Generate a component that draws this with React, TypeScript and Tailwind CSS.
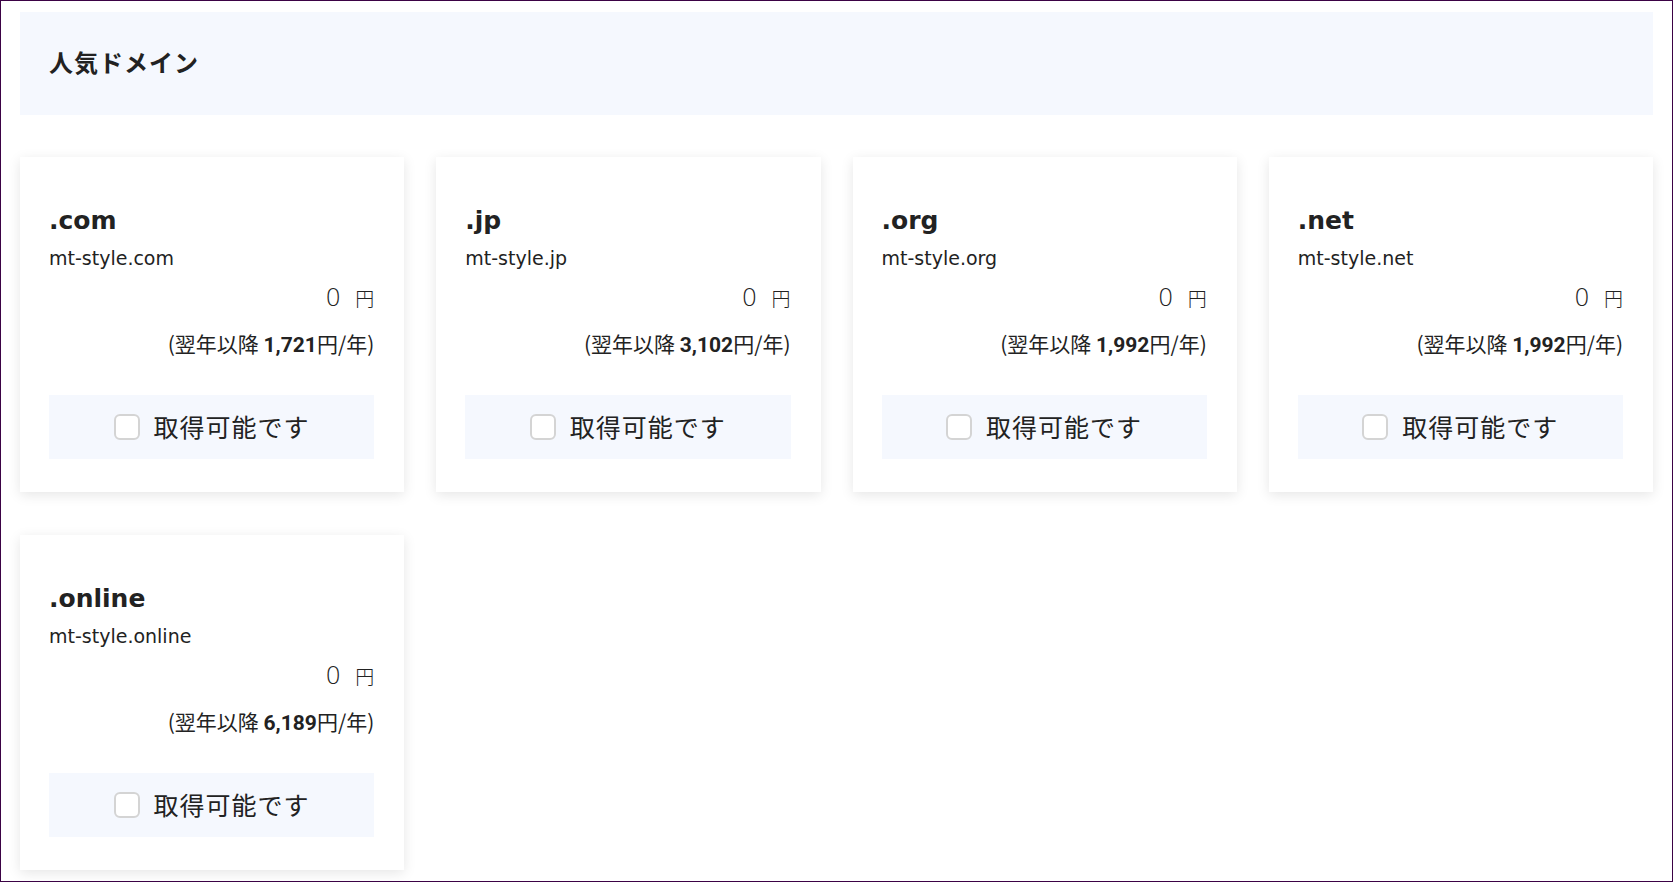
import { FC } from 'react';

interface DomainItem {
  tld: string;
  name: string;
  renewal: string;
}

const domains: DomainItem[] = [
  { tld: '.com', name: 'mt-style.com', renewal: '1,721' },
  { tld: '.jp', name: 'mt-style.jp', renewal: '3,102' },
  { tld: '.org', name: 'mt-style.org', renewal: '1,992' },
  { tld: '.net', name: 'mt-style.net', renewal: '1,992' },
  { tld: '.online', name: 'mt-style.online', renewal: '6,189' },
];

const latin = "font-['DejaVu_Sans','Noto_Sans_CJK_JP',sans-serif]";
const jp = "font-['Noto_Sans_CJK_JP','Noto_Sans',sans-serif]";

const DomainCard: FC<{ item: DomainItem }> = ({ item }) => (
  <div className="bg-white shadow-[0_3px_12px_rgba(0,0,0,0.1)] pt-[48px] pb-[33px] pl-[29px] pr-[30px] text-[#222]">
    <h3 className={`${latin} text-[25px] leading-[32px] font-bold`}>{item.tld}</h3>
    <p className={`${latin} text-[19px] leading-[26px] mt-[8px]`}>{item.name}</p>
    <div className={`${latin} text-right text-[25px] leading-[32px] font-light mt-[11px]`}>
      0<span className={`${jp} text-[19px] leading-[32px] ml-[14px]`}>円</span>
    </div>
    <p className={`${jp} text-right text-[21px] leading-[30px] mt-[14px]`}>
      (翌年以降 <span className="font-['Roboto',sans-serif] font-bold">{item.renewal}</span>円/年)
    </p>
    <label className="mt-[35px] h-[64px] bg-[#f5f8fe] flex items-center justify-center gap-[14px] cursor-pointer">
      <span className="w-[26px] h-[26px] rounded-[6px] border-2 border-[#d4d4d4] bg-white" />
      <span className={`${jp} text-[25px] tracking-[1px]`}>取得可能です</span>
    </label>
  </div>
);

const App: FC = () => {
  return (
    <div className="w-full h-[882px] border border-[#3b0245] bg-white px-[19px] pt-[11px] overflow-hidden">
      <div className="h-[103px] bg-[#f5f8fe] flex items-center pl-[29px] pb-[4px]">
        <h2 className={`${jp} text-[24px] font-semibold text-[#222] tracking-[1px]`}>人気ドメイン</h2>
      </div>
      <div className="grid grid-cols-4 gap-x-[32px] gap-y-[43px] mt-[42px]">
        {domains.map((d) => (
          <DomainCard key={d.tld} item={d} />
        ))}
      </div>
    </div>
  );
};

export default App;
